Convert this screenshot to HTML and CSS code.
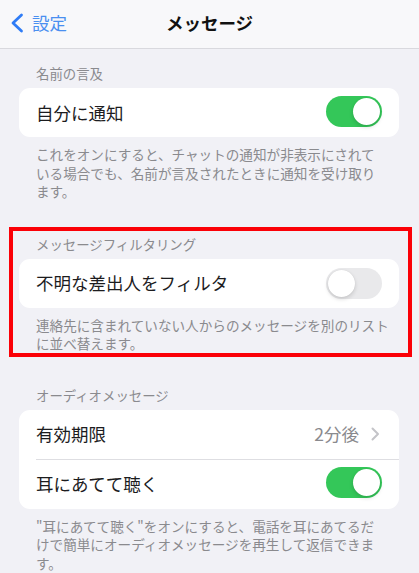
FILE: index.html
```html
<!DOCTYPE html>
<html lang="ja">
<head>
<meta charset="utf-8">
<link rel="stylesheet" href="styles.css">
</head>
<body>
<header class="nav">
  <div class="nav-back">
    <svg class="chev" width="14" height="20" viewBox="0 0 14 20"><path d="M11.5 2 L3 10 L11.5 18" fill="none" stroke="#2f7cf6" stroke-width="2.8" stroke-linecap="round" stroke-linejoin="round"/></svg>
    <span class="back-label">設定</span>
  </div>
  <div class="nav-title">メッセージ</div>
  <div></div>
</header>
<main class="content">
  <section class="group group-first">
    <div class="group-header">名前の言及</div>
    <div class="card">
      <div class="row">
        <span class="row-label">自分に通知</span>
        <span class="toggle on"><span class="knob"></span></span>
      </div>
    </div>
    <p class="group-footer">これをオンにすると、チャットの通知が非表示にされて<br>いる場合でも、名前が言及されたときに通知を受け取り<br>ます。</p>
  </section>
  <section class="group group-marked">
    <div class="group-header">メッセージフィルタリング</div>
    <div class="card">
      <div class="row">
        <span class="row-label">不明な差出人をフィルタ</span>
        <span class="toggle off"><span class="knob"></span></span>
      </div>
    </div>
    <p class="group-footer">連絡先に含まれていない人からのメッセージを別のリスト<br>に並べ替えます。</p>
  </section>
  <section class="group group-last">
    <div class="group-header">オーディオメッセージ</div>
    <div class="card">
      <div class="row">
        <span class="row-label">有効期限</span>
        <span class="row-value">2分後<svg class="disclosure" width="9" height="14" viewBox="0 0 9 14"><path d="M1.5 1.5 L7 7 L1.5 12.5" fill="none" stroke="#c4c4c8" stroke-width="2" stroke-linecap="round" stroke-linejoin="round"/></svg></span>
      </div>
      <div class="sep"></div>
      <div class="row">
        <span class="row-label">耳にあてて聴く</span>
        <span class="toggle on"><span class="knob"></span></span>
      </div>
    </div>
    <p class="group-footer">"耳にあてて聴く"をオンにすると、電話を耳にあてるだ<br>けで簡単にオーディオメッセージを再生して返信できま<br>す。</p>
  </section>
</main>
</body>
</html>
```
FILE: styles.css
```css
* { box-sizing: border-box; }
html, body { margin: 0; padding: 0; }
body {
  width: 419px;
  height: 573px;
  overflow: hidden;
  background: #f1f1f6;
  font-family: "Noto Sans CJK JP", "Noto Sans", sans-serif;
  color: #1c1c1e;
}
.nav {
  height: 49px;
  background: #f8f8fa;
  border-bottom: 1px solid #d9d9de;
  display: grid;
  grid-template-columns: 1fr auto 1fr;
  align-items: center;
}
.nav-back {
  display: flex;
  align-items: center;
  gap: 8px;
  padding-left: 10px;
  padding-bottom: 2px;
}
.chev { display: block; }
.back-label {
  font-size: 17.5px;
  line-height: 20px;
  color: #4a8ff0;
}
.nav-title {
  font-size: 17.5px;
  font-weight: 700;
  line-height: 20px;
  padding-bottom: 2px;
  color: #111;
}
.content {
  padding: 0 20px 0 19px;
}
.group-header {
  padding-left: 17px;
  font-size: 13.4px;
  line-height: 18px;
  color: #8a8a8e;
  margin-bottom: 6px;
}
.group-first { padding-top: 15px; }
.group-marked {
  margin: 26px -13px 0 -10px;
  border: 4px solid #fb0007;
  padding: 4px 9px 0 6px;
}
.group-last { margin-top: 29px; }
.card {
  background: #fff;
  border-radius: 11px;
  overflow: hidden;
}
.row {
  height: 49px;
  display: flex;
  align-items: center;
  justify-content: space-between;
  padding: 0 17px;
}
.row-label {
  font-size: 17.5px;
  line-height: 22px;
}
.row-value {
  display: flex;
  align-items: center;
  gap: 12px;
  font-size: 17.5px;
  line-height: 22px;
  color: #8a8a8e;
  padding-right: 2px;
}
.disclosure { display: block; }
.sep {
  height: 1px;
  background: #dedee2;
  margin-left: 17px;
}
.toggle {
  position: relative;
  width: 56px;
  height: 31px;
  border-radius: 16px;
  flex: none;
  margin-top: -3px;
}
.toggle.on { background: #34c759; }
.toggle.off { background: #e9e9eb; margin-top: 0; }
.knob {
  position: absolute;
  top: 2px;
  width: 27px;
  height: 27px;
  border-radius: 50%;
  background: #fff;
  box-shadow: 0 2px 4px rgba(0,0,0,0.15), 0 0 1px rgba(0,0,0,0.1);
}
.toggle.on .knob { right: 2px; }
.toggle.off .knob { left: 2px; }
.group-footer {
  margin: 0;
  padding: 8px 0 0 17px;
  font-size: 13.6px;
  line-height: 18.5px;
  color: #8a8a8e;
  white-space: nowrap;
}
```
